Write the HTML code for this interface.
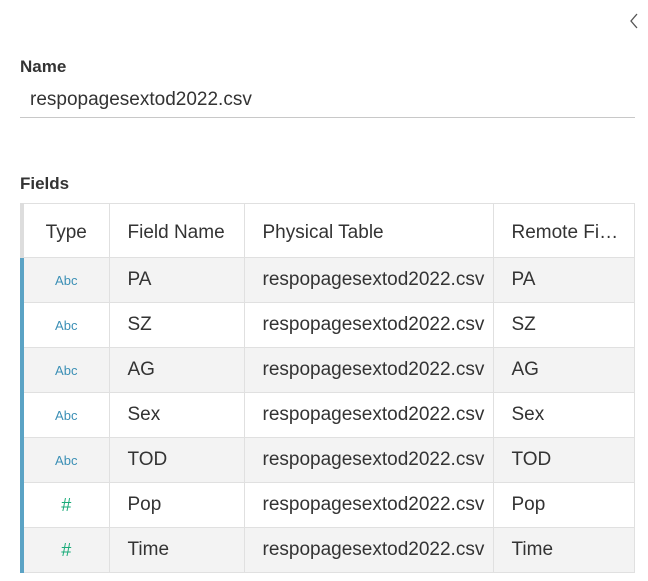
<html><head><style>
body{margin:0;width:648px;height:581px;background:#fff;font-family:"Liberation Sans",sans-serif;color:#333;position:relative;overflow:hidden}
.lbl{position:absolute;left:20px;font-size:17px;font-weight:bold;color:#333}
table{position:absolute;left:20px;top:203px;border-collapse:collapse;table-layout:fixed;width:612px}
td,th{border:1px solid #e0e0e0;font-size:19px;font-weight:normal;text-align:left;padding:0 0 0 18px;white-space:nowrap;overflow:hidden;text-overflow:ellipsis;height:45px;color:#333}
th{height:54px;padding-top:4px}
tr.g td{background:#f3f3f3}
td.t,th.t{border-left:4px solid #5ba3c5;text-align:center;padding:0}
th.t{border-left-color:#ddd;padding-top:4px}
.abc{color:#3b8fb5;font-size:13px}
.num{color:#1aab79;font-size:18px}
</style></head><body>
<svg style="position:absolute;left:629px;top:13px" width="10" height="16"><path d="M8 1L2 8L8 15" fill="none" stroke="#555" stroke-width="1.3"/></svg>
<div class="lbl" style="top:57px">Name</div>
<div style="position:absolute;left:30px;top:89px;font-size:19px;color:#333">respopagesextod2022.csv</div>
<div style="position:absolute;left:20px;top:117px;width:615px;height:1px;background:#c8c8c8"></div>
<div class="lbl" style="top:174px">Fields</div>
<table>
<colgroup><col style="width:87px"><col style="width:135px"><col style="width:249px"><col style="width:141px"></colgroup>
<tr><th class="t">Type</th><th>Field Name</th><th>Physical Table</th><th>Remote Fi…</th></tr>
<tr class="g"><td class="t"><span class="abc">Abc</span></td><td>PA</td><td>respopagesextod2022.csv</td><td>PA</td></tr>
<tr><td class="t"><span class="abc">Abc</span></td><td>SZ</td><td>respopagesextod2022.csv</td><td>SZ</td></tr>
<tr class="g"><td class="t"><span class="abc">Abc</span></td><td>AG</td><td>respopagesextod2022.csv</td><td>AG</td></tr>
<tr><td class="t"><span class="abc">Abc</span></td><td>Sex</td><td>respopagesextod2022.csv</td><td>Sex</td></tr>
<tr class="g"><td class="t"><span class="abc">Abc</span></td><td>TOD</td><td>respopagesextod2022.csv</td><td>TOD</td></tr>
<tr><td class="t"><span class="num">#</span></td><td>Pop</td><td>respopagesextod2022.csv</td><td>Pop</td></tr>
<tr class="g"><td class="t"><span class="num">#</span></td><td>Time</td><td>respopagesextod2022.csv</td><td>Time</td></tr>
</table>
</body></html>
